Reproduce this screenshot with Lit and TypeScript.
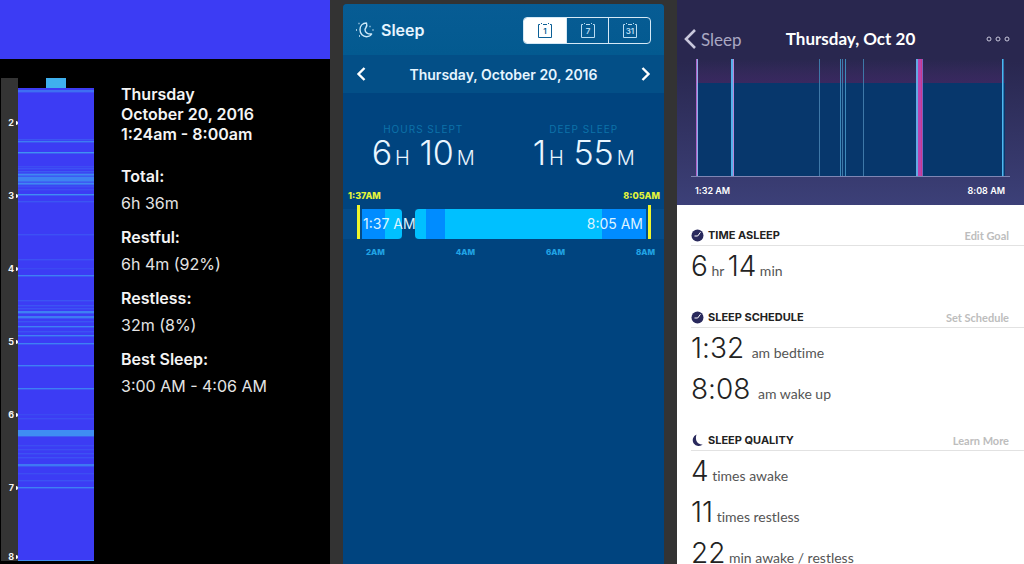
import { LitElement, html, css, svg } from "lit";
import { customElement, state } from "lit/decorators.js";

type Stripe = [y: number, h: number, alpha: number];

const MINUTES_TOP = 88;
const STRIPES: Stripe[] = [
  [90, 2, 0.6], [139, 1, 0.3], [141, 1, 0.75], [152, 1, 1], [166, 1, 0.2], [168, 1, 0.25], [171, 1, 0.35],
  [173, 12, 0.35], [174, 1, 0.85], [177, 4, 0.75], [183, 1, 0.85], [186, 1, 0.2], [189, 1, 0.2], [194, 1, 0.95], [201, 1, 0.3],
  [234, 1, 0.25], [259, 1, 0.25], [268, 1, 0.15], [275, 1, 0.8], [300, 1, 0.3], [305, 1, 0.3], [308, 1, 0.25],
  [311, 2, 0.8], [316, 2, 0.75], [321, 1, 0.3], [326, 1, 0.8], [331, 1, 0.25], [335, 1, 0.8], [343, 1, 0.8],
  [365, 1, 0.8], [388, 1, 0.8], [414, 1, 0.15], [418, 1, 0.2], [430, 6, 0.95], [445, 1, 0.2], [449, 1, 0.2],
  [453, 1, 0.25], [457, 1, 0.25], [464, 2, 0.7], [473, 1, 0.2], [480, 1, 0.25], [487, 1, 0.8], [560, 1, 0.95],
];

@customElement("sleep-log")
export class SleepLog extends LitElement {
  static styles = css`
    :host { display: flex; flex-direction: column; background: #000; color: #f4f4f4; min-width: 0;
      font-family: Inter, "Liberation Sans", sans-serif; }
    .banner { height: 59px; background: #3c3cf4; }
    .body { flex: 1; display: flex; padding: 19px 12px 3px 1px; }
    .hours { width: 17px; background: #343434; display: flex; flex-direction: column; margin: 0; padding: 36px 0 0;
      list-style: none; box-sizing: border-box; }
    .hours li { height: 73px; display: flex; align-items: flex-start; justify-content: flex-end; gap: 2px;
      font-size: 9px; line-height: 18px; font-weight: 700; flex: none; }
    .hours li:nth-last-child(2) { height: 69px; }
    .hours li:last-child { height: 0; }
    .tick { width: 2px; height: 4px; margin-top: 7px; border-radius: 0 2px 2px 0; background: #fff; }
    .track { width: 76px; display: flex; flex-direction: column; align-items: center; }
    .cap { width: 20px; height: 10px; background: #3fb0ee; }
    .track svg { flex: 1; width: 100%; display: block; }
    .info { padding: 6px 0 0 27px; font-size: 16px; }
    h2 { margin: 0 0 22px; font-size: 16px; line-height: 20px; font-weight: 600; }
    dl { margin: 0; }
    dt { font-weight: 600; line-height: 20px; }
    dd { margin: 7px 0 14px; line-height: 20px; font-weight: 400; color: #e4e4e4; }
  `;
  render() {
    return html`
      <div class="banner"></div>
      <div class="body">
        <ol class="hours">
          ${[2, 3, 4, 5, 6, 7, 8].map((h) => html`<li>${h}<span class="tick"></span></li>`)}
        </ol>
        <div class="track">
          <div class="cap"></div>
          <svg viewBox="0 0 76 473" preserveAspectRatio="none" aria-hidden="true">
            <rect width="76" height="473" fill="#3c3cf4" />
            ${STRIPES.map(([y, h, a]) => svg`<rect y=${y - MINUTES_TOP} width="76" height=${h + 0.4} fill="#3f91f2" opacity=${a} />`)}
          </svg>
        </div>
        <div class="info">
          <h2>Thursday<br />October 20, 2016<br />1:24am - 8:00am</h2>
          <dl>
            <dt>Total:</dt><dd>6h 36m</dd>
            <dt>Restful:</dt><dd>6h 4m (92%)</dd>
            <dt>Restless:</dt><dd>32m (8%)</dd>
            <dt>Best Sleep:</dt><dd>3:00 AM - 4:06 AM</dd>
          </dl>
        </div>
      </div>
    `;
  }
}

@customElement("sleep-card")
export class SleepCard extends LitElement {
  @state() private range = "1";

  static styles = css`
    :host { display: block; background: #333; padding: 4px 13px 0; min-width: 0; color: #fff;
      font-family: Inter, "Liberation Sans", sans-serif; }
    .card { height: 100%; background: #00447f; border-radius: 4px 4px 0 0; overflow: hidden; }
    header { display: flex; align-items: center; justify-content: space-between; height: 50px;
      padding: 1px 13px 0 12px; background: linear-gradient(#075c94, #035a90); }
    h2 { display: flex; align-items: center; gap: 6px; margin: 0; font-size: 16px; line-height: 20px; font-weight: 600; color: #e6f5ff; }
    .segments { display: flex; border: 1px solid #d5e9f6; border-radius: 4px; overflow: hidden; }
    .segments button { width: 42px; height: 25px; padding: 0; border: 0; background: none; color: #b9dcf2; display: grid; place-items: center; font-family: inherit; }
    .segments button + button { border-left: 1px solid #d5e9f6; }
    .segments button.on { background: #fff; color: #0b5f96; }
    .segments text { font-size: 8px; font-weight: 600; text-anchor: middle; fill: currentColor; }
    nav { display: flex; align-items: center; justify-content: space-between; height: 38px; padding: 0 13px;
      background: #034f87; font-size: 14px; font-weight: 600; color: #e6f5ff; }
    nav button { width: 10px; height: 16px; padding: 0; border: 0; background: none; display: flex; }
    .stats { display: grid; grid-template-columns: 1fr 1fr; padding: 29px 0 0; text-align: center; }
    .label { font-size: 10px; line-height: 14px; letter-spacing: 1px; color: #0d72a9; }
    .value { margin: 0; font-size: 34px; line-height: 34px; font-weight: 300; color: #e9f6ff; white-space: nowrap; }
    .value small { font-size: 20px; margin-left: 3px; }
    .ends, .axis { display: flex; justify-content: space-between; font-weight: 800; }
    .ends { padding: 14px 4px 0 5px; font-size: 9px; line-height: 14px; color: #e4f43a; }
    .axis { padding: 6px 9px 0 23px; font-size: 8px; line-height: 14px; color: #20a3e4; }
    .timeline { display: flex; align-items: flex-end; background: linear-gradient(transparent 4px, #044b88 4px);
      margin-top: 2px; padding: 0 13px 0 14px; height: 34px; gap: 2px; }
    .marker { width: 3px; height: 34px; background: #eff52c; flex: none; }
    .bar { flex: 1; height: 30px; display: grid; grid-template: 30px / 100%; }
    .bar > * { grid-area: 1 / 1; }
    .blocks { display: flex; }
    .piece { background: #00c0ff; }
    .piece.light { background: #008cff; }
    .piece.gap { background: #00447f; }
    .piece.last { border-radius: 0 4px 4px 0; }
    .piece.first { border-radius: 4px 0 0 4px; }
    .times { display: flex; justify-content: space-between; line-height: 30px; font-size: 14px; color: #dcf3ff; padding: 0 3px 0 1px; }
  `;

  private pieces: [string, number][] = [
    ["light", 23], ["last", 17], ["gap", 13], ["first", 11], ["light", 18], ["", 156], ["light", 44],
  ];

  render() {
    return html`
      <div class="card">
        <header>
          <h2>
            <svg width="20" height="18" viewBox="0 0 20 18" fill="none" stroke="#cce8f8" stroke-width="1.4" stroke-linejoin="round" aria-hidden="true">
              <path d="M11.500 2C7.500 2 5 5 5 8.800c0 4 3 6.900 6.500 6.900 2.300 0 4.200-1 5.200-2.700-3.700 .3-6.700-1.300-6.700-4.200 0-1.500 3-3 1.500-6.800z" />
              <path d="M3.500 2.500h1M1 9h1M4 15h1M14.500 5.500h1M17.500 9h1" />
            </svg>
            Sleep
          </h2>
          <div class="segments" role="group" aria-label="Range">
            ${["1", "7", "31"].map((d) => html`
              <button class=${this.range === d ? "on" : ""} aria-label="${d} days" @click=${() => (this.range = d)}>
                <svg width="16" height="17" viewBox="0 0 16 17" fill="none" aria-hidden="true">
                  <path d="M3 2.500H1.500v13h13v-13H13M6 2.500h4" stroke="currentColor" />
                  <path d="M4.500 1v2M11.500 1v2" stroke="currentColor" stroke-dasharray="1 1" />
                  <text x="8" y="12">${d}</text>
                </svg>
              </button>`)}
          </div>
        </header>
        <nav>
          <button aria-label="Previous day"><svg width="10" height="16" viewBox="0 0 10 16" fill="none" stroke="#fff" stroke-width="2.400"><path d="M8.500 2 2.500 8l6 6" /></svg></button>
          <span>Thursday, October 20, 2016</span>
          <button aria-label="Next day"><svg width="10" height="16" viewBox="0 0 10 16" fill="none" stroke="#fff" stroke-width="2.400"><path d="m1.500 2 6 6-6 6" /></svg></button>
        </nav>
        <div class="stats">
          <div><div class="label">HOURS SLEPT</div><p class="value">6<small>H</small> 10<small>M</small></p></div>
          <div><div class="label">DEEP SLEEP</div><p class="value">1<small>H</small> 55<small>M</small></p></div>
        </div>
        <div class="ends"><span>1:37AM</span><span>8:05AM</span></div>
        <div class="timeline">
          <span class="marker"></span>
          <div class="bar">
            <div class="blocks">${this.pieces.map(([c, n]) => html`<span class="piece ${c}" style="flex:${n}"></span>`)}</div>
            <div class="times"><span>1:37 AM</span><span>8:05 AM</span></div>
          </div>
          <span class="marker"></span>
        </div>
        <div class="axis"><span>2AM</span><span>4AM</span><span>6AM</span><span>8AM</span></div>
      </div>
    `;
  }
}

const clock = svg`<circle cx="6.500" cy="6.500" r="6" fill="#29295c" /><path d="M3.500 7h3.200l2.800-3.800" fill="none" stroke="#fff" />`;
const moon = svg`<path d="M5.500.5A6 6 0 1 0 12 10.300C7 11.500 3.500 6.500 5.500.5z" fill="#29295c" />`;

@customElement("sleep-detail")
export class SleepDetail extends LitElement {
  static styles = css`
    :host { display: block; background: #fff; color: #222; min-width: 0; overflow: hidden;
      font-family: Lato, sans-serif; font-variant-ligatures: none; }
    .top { background: linear-gradient(#29274f 0 30%, #3c4078); color: #fff; padding: 27px 14px 7px; }
    nav { display: grid; grid-template-columns: 1fr auto 1fr; align-items: center; height: 24px; }
    .back { display: flex; align-items: center; gap: 5px; margin-left: -7px; color: #a9a8c2; text-decoration: none; font-size: 17px; }
    h2 { margin: 0; font-size: 17px; line-height: 24px; font-weight: 700; }
    .more { justify-self: end; padding: 0; border: 0; background: none; display: flex; }
    .chart { display: block; width: 100%; height: 118px; margin-top: 8px; }
    .range { display: flex; justify-content: space-between; padding: 7px 5px 0 4px; font-family: Inter, sans-serif;
      font-size: 9px; line-height: 14px; font-weight: 600; }
    section { padding: 20px 0 0 14px; }
    .head { display: flex; align-items: center; height: 20px; border-bottom: 1px solid #e2e2e2; padding-right: 15px; gap: 4px; }
    h3 { flex: 1; margin: 0; font-size: 11px; font-weight: 700; font-family: Inter, sans-serif; }
    .head a { font-size: 11px; font-weight: 700; color: #bdbdbd; text-decoration: none; }
    p { margin: 0; height: 41px; line-height: 41px; font-size: 14px; color: #555; white-space: nowrap; }
    b { font-family: Inter, sans-serif; font-size: 28px; font-weight: 300; color: #222; }
    .clock { margin-right: 4px; }
  `;

  private lines: [number, number, string][] = [
    [5, 1, "#b064c8"], [6, 1, "#8fb0e8"], [40, 2, "#55b0e8"], [42, 1, "#b987d8"], [128, 1, "#3e78a8"],
    [149, 1, "#3e8abb"], [151, 1, "#3e78a8"], [154, 1, "#3e8abb"], [172, 1, "#3e78a8"], [225, 2, "#62aae4"],
    [227, 3, "#b843b0"], [230, 1, "#c83a8c"], [231, 1, "#7d62c0"], [311, 1, "#4db8f0"], [312, 1, "#2f78b0"],
  ];

  private section(icon: unknown, title: string, action: string, rows: unknown) {
    return html`<section>
      <div class="head"><svg width="13" height="13" viewBox="0 0 13 13" aria-hidden="true">${icon}</svg><h3>${title}</h3><a href="#">${action}</a></div>
      ${rows}
    </section>`;
  }

  render() {
    return html`
      <div class="top">
        <nav>
          <a class="back" href="#"><svg width="12" height="20" viewBox="0 0 12 20" fill="none" stroke="#c9c8dc" stroke-width="2.600"><path d="M11 1 2 10l9 9" /></svg>Sleep</a>
          <h2>Thursday, Oct 20</h2>
          <button class="more" aria-label="More"><svg width="24" height="6" viewBox="0 0 24 6" fill="none" stroke="#c9c8dc"><circle cx="3" cy="3" r="2" /><circle cx="12" cy="3" r="2" /><circle cx="21" cy="3" r="2" /></svg></button>
        </nav>
        <svg class="chart" viewBox="0 0 319 118" preserveAspectRatio="none" aria-hidden="true">
          <defs>
            <linearGradient id="haze" x1="0" y1="0" x2="0" y2="1">
              <stop offset="0" stop-color="#3a2860" stop-opacity="0" />
              <stop offset="1" stop-color="#3a2860" />
            </linearGradient>
          </defs>
          <rect x="5" width="309" height="25" fill="url(#haze)" />
          <rect x="5" y="24" width="309" height="93" fill="#07376c" />
          ${this.lines.map(([x, w, c]) => svg`<rect x=${x} width=${w} height="117" fill=${c} />`)}
          <rect y="117" width="319" height="1" fill="#7f86b4" />
        </svg>
        <div class="range"><span>1:32 AM</span><span>8:08 AM</span></div>
      </div>
      ${this.section(clock, "TIME ASLEEP", "Edit Goal", html`<p><b>6</b> hr <b>14</b> min</p>`)}
      ${this.section(clock, "SLEEP SCHEDULE", "Set Schedule", html`<p><b class="clock">1:32</b> am bedtime</p><p><b class="clock">8:08</b> am wake up</p>`)}
      ${this.section(moon, "SLEEP QUALITY", "Learn More", html`<p><b>4</b> times awake</p><p><b>11</b> times restless</p><p><b>22</b> min awake / restless</p>`)}
    `;
  }
}

@customElement("app-root")
export class AppRoot extends LitElement {
  static styles = css`
    :host { display: grid; grid-template-columns: 330fr 347fr 347fr; height: 100vh; overflow: hidden; }
  `;
  render() {
    return html`<sleep-log></sleep-log><sleep-card></sleep-card><sleep-detail></sleep-detail>`;
  }
}
